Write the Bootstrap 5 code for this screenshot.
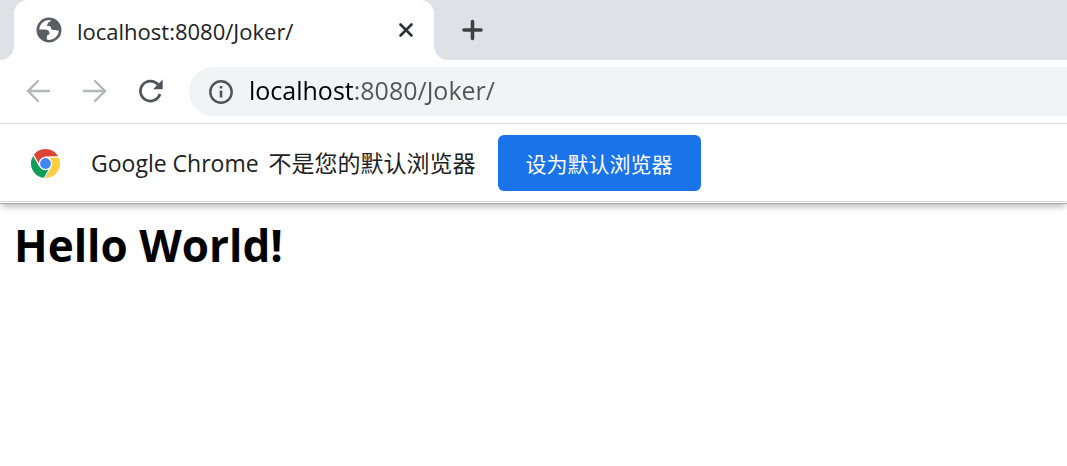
<!DOCTYPE html>
<html lang="zh-CN">
<head>
<meta charset="utf-8">
<meta name="viewport" content="width=device-width, initial-scale=1">
<title>localhost:8080/Joker/</title>
<link href="https://cdn.jsdelivr.net/npm/bootstrap@5.3.0/dist/css/bootstrap.min.css" rel="stylesheet">
<style>
  body { font-family: "Open Sans", "Noto Sans CJK SC", sans-serif; background: #fff; color: #000; }
  .tab-strip { height: 60px; }
  .strip-fill { background: #dee1e6; }
  .strip-start { width: 14px; border-bottom-right-radius: 14px; }
  .strip-end { border-bottom-left-radius: 14px; padding-left: 26px; }
  .tab-face { width: 420px; border-radius: 14px 14px 0 0; padding: 0 20px 0 22px; }
  .tab-title { font-size: 22px; color: #202124; margin-left: 15px; padding-top: 2px; }
  .plain-btn { border: 0; background: none; padding: 0; color: #3c4043; line-height: 1; display: flex; }
  .nav-bar { border-bottom: 1px solid #dadce0; padding: 7px 0 7px 24px; }
  .nav-tools { gap: 28px; margin-right: 25px; padding-bottom: 2px; color: #50555b; }
  .nav-tools .plain-btn { color: inherit; }
  .nav-tools .plain-btn:disabled { color: #b4b6b9; }
  .address { height: 49px; background: #f1f3f4; border-radius: 25px 0 0 25px; padding-left: 19px; gap: 15px; color: #50555b; }
  .address input {
    border: 0; outline: 0; padding: 0 0 2px; font-size: 25px; color: #50555b;
    background: linear-gradient(90deg, #000 106px, #50555b 106px);
    -webkit-background-clip: text; background-clip: text; -webkit-text-fill-color: transparent;
  }
  .info-bar { padding: 11px 30px 10px; border-bottom: 1px solid #d6d6d6; box-shadow: 0 1px 0 #fff, 0 2px 0 #a8a8a8, 0 7px 6px -2px rgba(0,0,0,.26); }
  .info-text { font-size: 23px; color: #202124; margin: 0 22px 0 30px; }
  .default-btn { height: 56px; padding: 4px 28px 0; font-size: 21px; border-radius: 6px; border: 0;
    --bs-btn-bg: #1a73e8; --bs-btn-color: #fff; --bs-btn-hover-bg: #1b66c9; --bs-btn-hover-color: #fff; }
  .page-body { padding: 13px 14px; }
  .page-body h1 { font-size: 44px; font-weight: 700; line-height: 60px; margin: 0; }
</style>
</head>
<body>
<header>
  <div class="tab-strip d-flex">
    <div class="strip-fill strip-start flex-shrink-0"></div>
    <div class="strip-fill">
      <div class="tab-face bg-white h-100 d-flex align-items-center">
        <svg class="flex-shrink-0" width="26" height="26" viewBox="0 0 26 26" aria-hidden="true">
          <circle cx="13" cy="13" r="11.2" fill="#fff" stroke="#5a5f65" stroke-width="2.6"/>
          <path fill="#5a5f65" d="M15 1.500C15.500 3.500 14.500 5 12.500 5.500C11.500 6 12 8 10.500 8.500C12 9.500 13.500 9 14.500 9.500C15.500 10.500 14.500 12 16 12.500C18 13.500 19 12.500 20.500 13.500L24.500 13.500C25 7 20.500 2 15 1.500ZM1.500 12.500L8 12.500C11 12.500 13.500 13.500 13.500 16C13.500 18 11.500 17.500 11 19C10.500 20.500 11.500 22 10 24C4.500 22 1.500 18 1.500 12.500Z"/>
        </svg>
        <span class="tab-title flex-grow-1 text-nowrap">localhost:8080/Joker/</span>
        <button type="button" class="plain-btn" aria-label="关闭标签页">
          <svg width="16" height="16" viewBox="0 0 16 16" fill="none" stroke="#2b3036" stroke-width="2.600" stroke-linecap="round"><path d="M2.500 2.500l11 11M13.500 2.500l-11 11"/></svg>
        </button>
      </div>
    </div>
    <div class="strip-fill strip-end flex-grow-1 d-flex align-items-center">
      <button type="button" class="plain-btn" aria-label="新标签页">
        <svg width="24" height="24" viewBox="0 0 24 24" fill="none" stroke="currentColor" stroke-width="3.600" stroke-linecap="round"><path d="M12.500 3.500v17M4 12h17"/></svg>
      </button>
    </div>
  </div>
  <nav class="nav-bar d-flex align-items-center">
    <div class="nav-tools d-flex align-items-center">
      <button type="button" class="plain-btn" disabled aria-label="后退">
        <svg width="28" height="28" viewBox="0 0 28 28" fill="none" stroke="currentColor" stroke-width="2.400" stroke-linecap="round"><path d="M25 14H4M14 4L4 14l10 10"/></svg>
      </button>
      <button type="button" class="plain-btn" disabled aria-label="前进">
        <svg width="28" height="28" viewBox="0 0 28 28" fill="none" stroke="currentColor" stroke-width="2.400" stroke-linecap="round"><path d="M4 14h21M15 4l10 10-10 10"/></svg>
      </button>
      <button type="button" class="plain-btn" aria-label="重新加载">
        <svg width="28" height="28" viewBox="0 0 28 28"><path fill="none" stroke="currentColor" stroke-width="2.700" d="M24 17A10 10 0 1 1 22 7.500"/><path fill="currentColor" d="M26.700 2.500v9.700H17z"/></svg>
      </button>
    </div>
    <div class="address flex-grow-1 d-flex align-items-center">
      <svg class="flex-shrink-0" width="26" height="26" viewBox="0 0 26 26" fill="none" stroke="currentColor" stroke-width="2.400" aria-hidden="true"><circle cx="13" cy="13" r="10.700"/><path stroke-width="2.600" d="M13 11.500v7M13 7v2.600"/></svg>
      <input class="flex-grow-1" type="text" aria-label="地址" value="localhost:8080/Joker/" spellcheck="false">
    </div>
  </nav>
  <div class="info-bar d-flex align-items-center">
    <svg class="flex-shrink-0" width="31" height="31" viewBox="-15.500 -15.500 31 31" aria-hidden="true">
      <path fill="#db4437" d="M-12.560 -7.250A14.500 14.500 0 0 1 12.560 -7.250L0 -6.800L-5.900 3.400Z"/>
      <path fill="#0f9d58" d="M-12.560 -7.250A14.500 14.500 0 0 0 0 14.500L5.900 3.400L-5.900 3.400Z"/>
      <path fill="#ffcd40" d="M12.560 -7.250A14.500 14.500 0 0 1 0 14.500L5.900 3.400L0 -6.800Z"/>
      <path fill="none" stroke="#fff" stroke-width="1.200" d="M0 -6.200H14M-5.400 3.100L-12.400 -9M5.400 3.100L-1.600 15.200"/>
      <circle r="6.800" fill="#fff"/><circle r="5.400" fill="#4285f4"/>
    </svg>
    <span class="info-text text-nowrap">Google Chrome <span class="ms-1">不是您的默认浏览器</span></span>
    <button type="button" class="btn default-btn text-nowrap">设为默认浏览器</button>
  </div>
</header>
<main class="page-body"><h1>Hello World!</h1></main>
<script src="https://cdn.jsdelivr.net/npm/bootstrap@5.3.0/dist/js/bootstrap.bundle.min.js"></script>
</body>
</html>
